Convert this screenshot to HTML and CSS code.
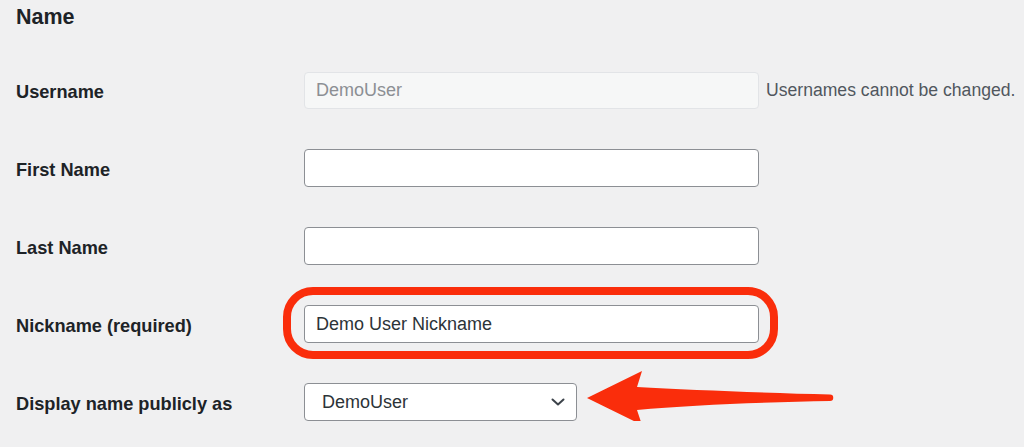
FILE: index.html
```html
<!DOCTYPE html>
<html lang="en">
<head>
<meta charset="utf-8">
<title>Name</title>
<link rel="stylesheet" href="styles.css">
</head>
<body>
<main class="page">
  <h2 class="title">Name</h2>
  <div class="form">
    <div class="row">
      <label class="label" for="user_login">Username</label>
      <div class="field">
        <input class="input input-disabled" id="user_login" type="text" value="DemoUser" disabled>
        <span class="note">Usernames cannot be changed.</span>
      </div>
    </div>
    <div class="row">
      <label class="label" for="first_name">First Name</label>
      <div class="field"><input class="input" id="first_name" type="text" value=""></div>
    </div>
    <div class="row">
      <label class="label" for="last_name">Last Name</label>
      <div class="field"><input class="input" id="last_name" type="text" value=""></div>
    </div>
    <div class="row">
      <label class="label" for="nickname">Nickname (required)</label>
      <div class="field">
        <input class="input" id="nickname" type="text" value="Demo User Nickname">
        <span class="ring" aria-hidden="true"></span>
      </div>
    </div>
    <div class="row">
      <label class="label" for="display_name">Display name publicly as</label>
      <div class="field">
        <div class="select-wrap">
          <select class="select" id="display_name">
            <option>DemoUser</option>
          </select>
          <svg class="chevron" width="14" height="8" viewBox="0 0 14 8" aria-hidden="true"><path d="M1.5 1.5 L7 6.5 L12.5 1.5" fill="none" stroke="#3c434a" stroke-width="2" stroke-linecap="round" stroke-linejoin="round"/></svg>
        </div>
        <svg class="arrow" width="260" height="66" viewBox="0 0 260 66" aria-hidden="true"><path d="M7 33 L62 6 L57 22 C110 25 190 28 250 29.5 A3.2 3.2 0 0 1 250 36 C190 37 110 40 57 45 L62 60 Z" fill="#fa2d0b"/></svg>
      </div>
    </div>
  </div>
</main>
</body>
</html>
```

FILE: styles.css
```css
html, body {
  margin: 0;
  padding: 0;
  background: #f0f0f1;
}

body {
  font-family: "Liberation Sans", Arial, Helvetica, sans-serif;
  color: #1d2327;
}

.page {
  padding: 0 16px;
}

.title {
  margin: 0;
  padding-top: 3px;
  font-size: 21.5px;
  line-height: 28px;
  font-weight: 700;
  color: #1d2327;
}

.form {
  display: flex;
  flex-direction: column;
  gap: 40px;
  margin-top: 40px;
}

.row {
  display: grid;
  grid-template-columns: 288px 1fr;
  align-items: center;
  height: 38px;
}

.label {
  font-size: 18.2px;
  font-weight: 700;
  color: #1d2327;
  padding-top: 4px;
}

.field {
  position: relative;
  display: flex;
  align-items: center;
  gap: 7px;
  height: 38px;
}

.input {
  box-sizing: border-box;
  width: 455px;
  height: 38px;
  margin: 0;
  padding: 0 11px;
  border: 1px solid #8c8f94;
  border-radius: 4px;
  background: #fff;
  font-family: "Liberation Sans", Arial, Helvetica, sans-serif;
  font-size: 18px;
  color: #2c3338;
  outline: none;
}

.input-disabled {
  background: #f6f7f7;
  border-color: #e2e4e7;
  color: #8c8f94;
  height: 37px;
}

.note {
  font-size: 17.6px;
  color: #50575e;
  white-space: nowrap;
}

.ring {
  position: absolute;
  left: -21px;
  top: -18px;
  width: 495px;
  height: 72px;
  box-sizing: border-box;
  border: 8px solid #fa2d0b;
  border-radius: 30px;
  pointer-events: none;
}

.select-wrap {
  position: relative;
  width: 273px;
  height: 38px;
}

.select {
  appearance: none;
  -webkit-appearance: none;
  box-sizing: border-box;
  width: 273px;
  height: 38px;
  margin: 0;
  padding: 0 32px 0 17px;
  border: 1px solid #8c8f94;
  border-radius: 4px;
  background: #fff;
  font-family: "Liberation Sans", Arial, Helvetica, sans-serif;
  font-size: 18px;
  color: #2c3338;
  outline: none;
}

.chevron {
  position: absolute;
  right: 12px;
  top: 15px;
  pointer-events: none;
}

.arrow {
  position: absolute;
  left: 276px;
  top: -18px;
  pointer-events: none;
}
```
